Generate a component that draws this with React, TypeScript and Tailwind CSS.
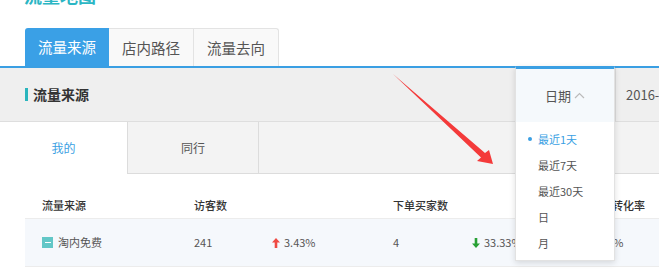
import React from "react";

const UpArrow = () => (
  <svg width="8" height="10" viewBox="0 0 8 10" className="inline-block mr-[4px]">
    <path d="M4 0 L8 4.5 H5.3 V10 H2.7 V4.5 H0 Z" fill="#ef4a43" />
  </svg>
);
const DownArrow = () => (
  <svg width="8" height="10" viewBox="0 0 8 10" className="inline-block mr-[4px]">
    <path d="M4 10 L8 5.5 H5.3 V0 H2.7 V5.5 H0 Z" fill="#27a035" />
  </svg>
);

export default function App() {
  return (
    <div className="relative w-[659px] h-[269px] overflow-hidden bg-white font-['Noto_Sans_CJK_SC','Noto_Sans',sans-serif] text-[#555]">
      {/* cut-off page title */}
      <div className="h-[6px] overflow-hidden pl-[24px]">
        <div className="-mt-[14px] text-[18px] font-bold leading-[18px] text-[#2bb6c4] whitespace-nowrap">流量地图</div>
      </div>

      {/* main tabs */}
      <div className="mt-[22px] flex h-[38px] pl-[25px] text-[14.5px]">
        <div className="flex w-[84px] items-center justify-center rounded-tl-[3px] bg-[#3aa0e6] text-white">流量来源</div>
        <div className="flex w-[85px] items-center justify-center border-t border-r border-[#e3e3e3] bg-[#f9f9f9] text-[#555]">店内路径</div>
        <div className="flex w-[85px] items-center justify-center rounded-tr-[3px] border-t border-r border-[#e3e3e3] bg-[#f9f9f9] text-[#555]">流量去向</div>
      </div>
      <div className="h-[2px] bg-[#3a9fe3]" />

      {/* section header */}
      <div className="flex h-[54px] items-center border-b border-[#dedede] bg-[#efefef]">
        <div className="ml-[25px] h-[13px] w-[3px] bg-[#2ab5bd]" />
        <div className="ml-[5px] text-[14px] font-bold text-[#333]">流量来源</div>
        <div className="ml-auto flex h-full w-[44px] items-center overflow-hidden whitespace-nowrap border-l border-[#dcdcdc] pl-[10px] text-[13px] text-[#555]">2016-</div>
      </div>

      {/* sub tabs */}
      <div className="flex h-[52px] text-[12px]">
        <div className="flex w-[128px] items-center justify-center border-r border-[#dcdcdc] bg-white text-[#3a9fe3]">我的</div>
        <div className="flex w-[131px] items-center justify-center border-r border-b border-[#dcdcdc] bg-[#f3f3f3] text-[#555]">同行</div>
        <div className="flex-1 border-b border-[#dcdcdc] bg-[#f3f3f3]" />
      </div>

      {/* table */}
      <div className="ml-[25px]">
        <div className="flex h-[45px] items-end border-b border-[#ececec] pb-[5px] pl-[17px] text-[11px] font-medium text-[#333] whitespace-nowrap">
          <div className="w-[152px]">流量来源</div>
          <div className="w-[78px]">访客数</div>
          <div className="w-[121px]" />
          <div className="w-[79px]">下单买家数</div>
          <div className="w-[118px]" />
          <div>支付转化率</div>
        </div>
        <div className="flex h-[48px] items-center border-b border-[#ececec] bg-[#f5f8fc] pl-[17px] text-[11px] text-[#555] whitespace-nowrap">
          <div className="flex w-[152px] items-center">
            <div className="mr-[5px] flex h-[11px] w-[11px] items-center justify-center bg-[#62c7c7]">
              <div className="h-[1.5px] w-[6px] bg-white" />
            </div>
            淘内免费
          </div>
          <div className="w-[78px]">241</div>
          <div className="flex w-[121px] items-center"><UpArrow />3.43%</div>
          <div className="w-[79px]">4</div>
          <div className="flex w-[118px] items-center"><DownArrow />33.33%</div>
          <div className="pl-[2px]">1.66%</div>
        </div>
      </div>

      {/* date dropdown */}
      <div className="absolute left-[515px] top-[66px] w-[100px] border-x border-b border-t-[3px] border-x-[#e2e2e2] border-b-[#e2e2e2] border-t-[#3a9fe3] bg-white shadow-[0_2px_6px_rgba(0,0,0,0.13)]">
        <div className="flex h-[53px] items-center justify-center bg-[#f5f9fc] text-[13px] text-[#555]">
          日期
          <svg width="11" height="7" viewBox="0 0 11 7" className="ml-[3px]">
            <polyline points="1,6 5.5,1.5 10,6" fill="none" stroke="#bbb" strokeWidth="1.2" />
          </svg>
        </div>
        <div className="pt-[4px] pb-[4px] text-[11px] text-[#555]">
          <div className="relative flex h-[26px] items-center pl-[22px] text-[#3a9fe3]">
            <span className="absolute left-[12px] top-[11px] h-[4px] w-[4px] rounded-full bg-[#3a9fe3]" />
            最近1天
          </div>
          <div className="flex h-[26px] items-center pl-[22px]">最近7天</div>
          <div className="flex h-[26px] items-center pl-[22px]">最近30天</div>
          <div className="flex h-[26px] items-center pl-[22px]">日</div>
          <div className="flex h-[26px] items-center pl-[22px]">月</div>
        </div>
      </div>

      {/* red annotation arrow */}
      <svg className="pointer-events-none absolute left-0 top-0" width="659" height="269" viewBox="0 0 659 269">
        <polygon points="393,74 485,153 489,150 493,164 477,161 481,157.5" fill="#f43a3a" />
      </svg>
    </div>
  );
}
